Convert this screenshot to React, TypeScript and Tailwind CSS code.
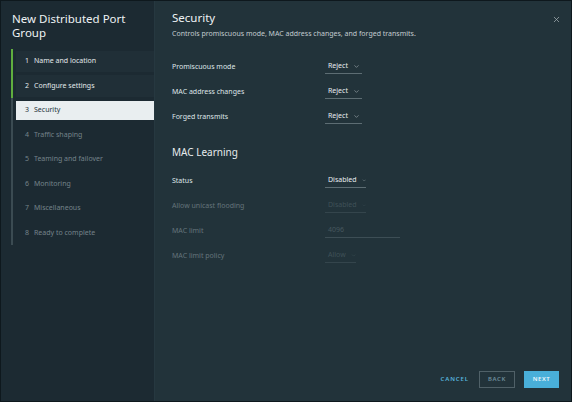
import { ChevronDown, X } from 'lucide-react';

const steps = [
  { n: 1, label: 'Name and location', state: 'done' },
  { n: 2, label: 'Configure settings', state: 'done' },
  { n: 3, label: 'Security', state: 'current' },
  { n: 4, label: 'Traffic shaping', state: 'todo' },
  { n: 5, label: 'Teaming and failover', state: 'todo' },
  { n: 6, label: 'Monitoring', state: 'todo' },
  { n: 7, label: 'Miscellaneous', state: 'todo' },
  { n: 8, label: 'Ready to complete', state: 'todo' },
];

const Dropdown = ({ value, disabled, width = 'w-[37px]' }: { value: string; disabled?: boolean; width?: string }) => (
  <div className={`flex items-center h-[14px] border-b ${width} ${disabled ? 'border-[#34454c]' : 'border-[#5d6d73]'}`}>
    <span className={`pl-[3px] text-[7px] ${disabled ? 'text-[#3f5158]' : 'text-[#e8edef]'}`}>{value}</span>
    <ChevronDown size={7} strokeWidth={2} className={`ml-[5px] ${disabled ? 'text-[#3f5158]' : 'text-[#a9b4b8]'}`} />
  </div>
);

const Row = ({ label, disabled, children }: { label: string; disabled?: boolean; children: React.ReactNode }) => (
  <div className="flex items-center h-[25px]">
    <div className={`w-[153px] text-[7px] ${disabled ? 'text-[#64747a]' : 'text-[#dfe5e8]'}`}>{label}</div>
    {children}
  </div>
);

export default function App() {
  return (
    <div
      className="w-[572px] h-[402px] bg-[#0e181d] p-[1px] overflow-hidden"
      style={{ fontFamily: '"Noto Sans", "Open Sans", sans-serif' }}
    >
      <div className="flex h-full">
        <aside className="w-[154px] shrink-0 bg-[#1c2a32] border-r border-[#263840] flex flex-col">
          <h1 className="pl-[11px] pt-[11px] text-[11.5px] leading-[14px] text-[#eef2f4]">
            New Distributed Port Group
          </h1>
          <ul className="mt-[9px] pl-[10px]">
            {steps.map((s) => (
              <li key={s.n} className="flex h-[24.5px]">
                <div className={`w-[2px] ${s.state === 'done' ? 'bg-[#5fae3f]' : 'bg-[#3b4b52]'}`} />
                <div
                  className={`flex-1 ml-[3px] flex items-center pl-[9px] text-[7px] ${
                    s.state === 'current'
                      ? 'my-[2.5px] bg-[#e9eef0] text-[#25343b]'
                      : s.state === 'done'
                      ? 'my-[1.5px] bg-[#202f37] text-[#e3e9eb]'
                      : 'text-[#74838a]'
                  }`}
                >
                  <span className="w-[9px]">{s.n}</span>
                  <span>{s.label}</span>
                </div>
              </li>
            ))}
          </ul>
        </aside>
        <main className="flex-1 bg-[#22333a] flex flex-col relative">
          <button className="absolute right-[10px] top-[14px] text-[#a3aeb2]">
            <X size={9} strokeWidth={2} />
          </button>
          <div className="pl-[17px] pt-[9px] flex-1">
            <h2 className="text-[11.5px] leading-[16px] text-[#eef2f4]">Security</h2>
            <p className="mt-[3px] text-[7px] text-[#c3ccd0]">
              Controls promiscuous mode, MAC address changes, and forged transmits.
            </p>
            <div className="mt-[15px]">
              <Row label="Promiscuous mode">
                <Dropdown value="Reject" />
              </Row>
              <Row label="MAC address changes">
                <Dropdown value="Reject" />
              </Row>
              <Row label="Forged transmits">
                <Dropdown value="Reject" />
              </Row>
            </div>
            <h3 className="mt-[15px] text-[10px] leading-[14px] text-[#e6ebed]">MAC Learning</h3>
            <div className="mt-[10px]">
              <Row label="Status">
                <Dropdown value="Disabled" width="w-[41px]" />
              </Row>
              <Row label="Allow unicast flooding" disabled>
                <Dropdown value="Disabled" width="w-[41px]" disabled />
              </Row>
              <Row label="MAC limit" disabled>
                <div className="w-[75px] h-[14px] border-b border-[#3d4e55] flex items-center">
                  <span className="pl-[3px] text-[7px] text-[#47585f]">4096</span>
                </div>
              </Row>
              <Row label="MAC limit policy" disabled>
                <Dropdown value="Allow" width="w-[31px]" disabled />
              </Row>
            </div>
          </div>
          <div className="flex justify-end items-center gap-[9px] pr-[12px] pb-[13px]">
            <button className="h-[17px] px-[1px] text-[6px] font-semibold tracking-[0.9px] text-[#57b5dd]">CANCEL</button>
            <button className="h-[17px] w-[36px] border border-[#506168] text-[6px] font-semibold tracking-[0.6px] text-[#6d8d9a]">
              BACK
            </button>
            <button className="h-[17px] w-[35px] bg-[#49afd9] text-[6px] font-semibold tracking-[0.6px] text-[#eaf7fc]">
              NEXT
            </button>
          </div>
        </main>
      </div>
    </div>
  );
}
